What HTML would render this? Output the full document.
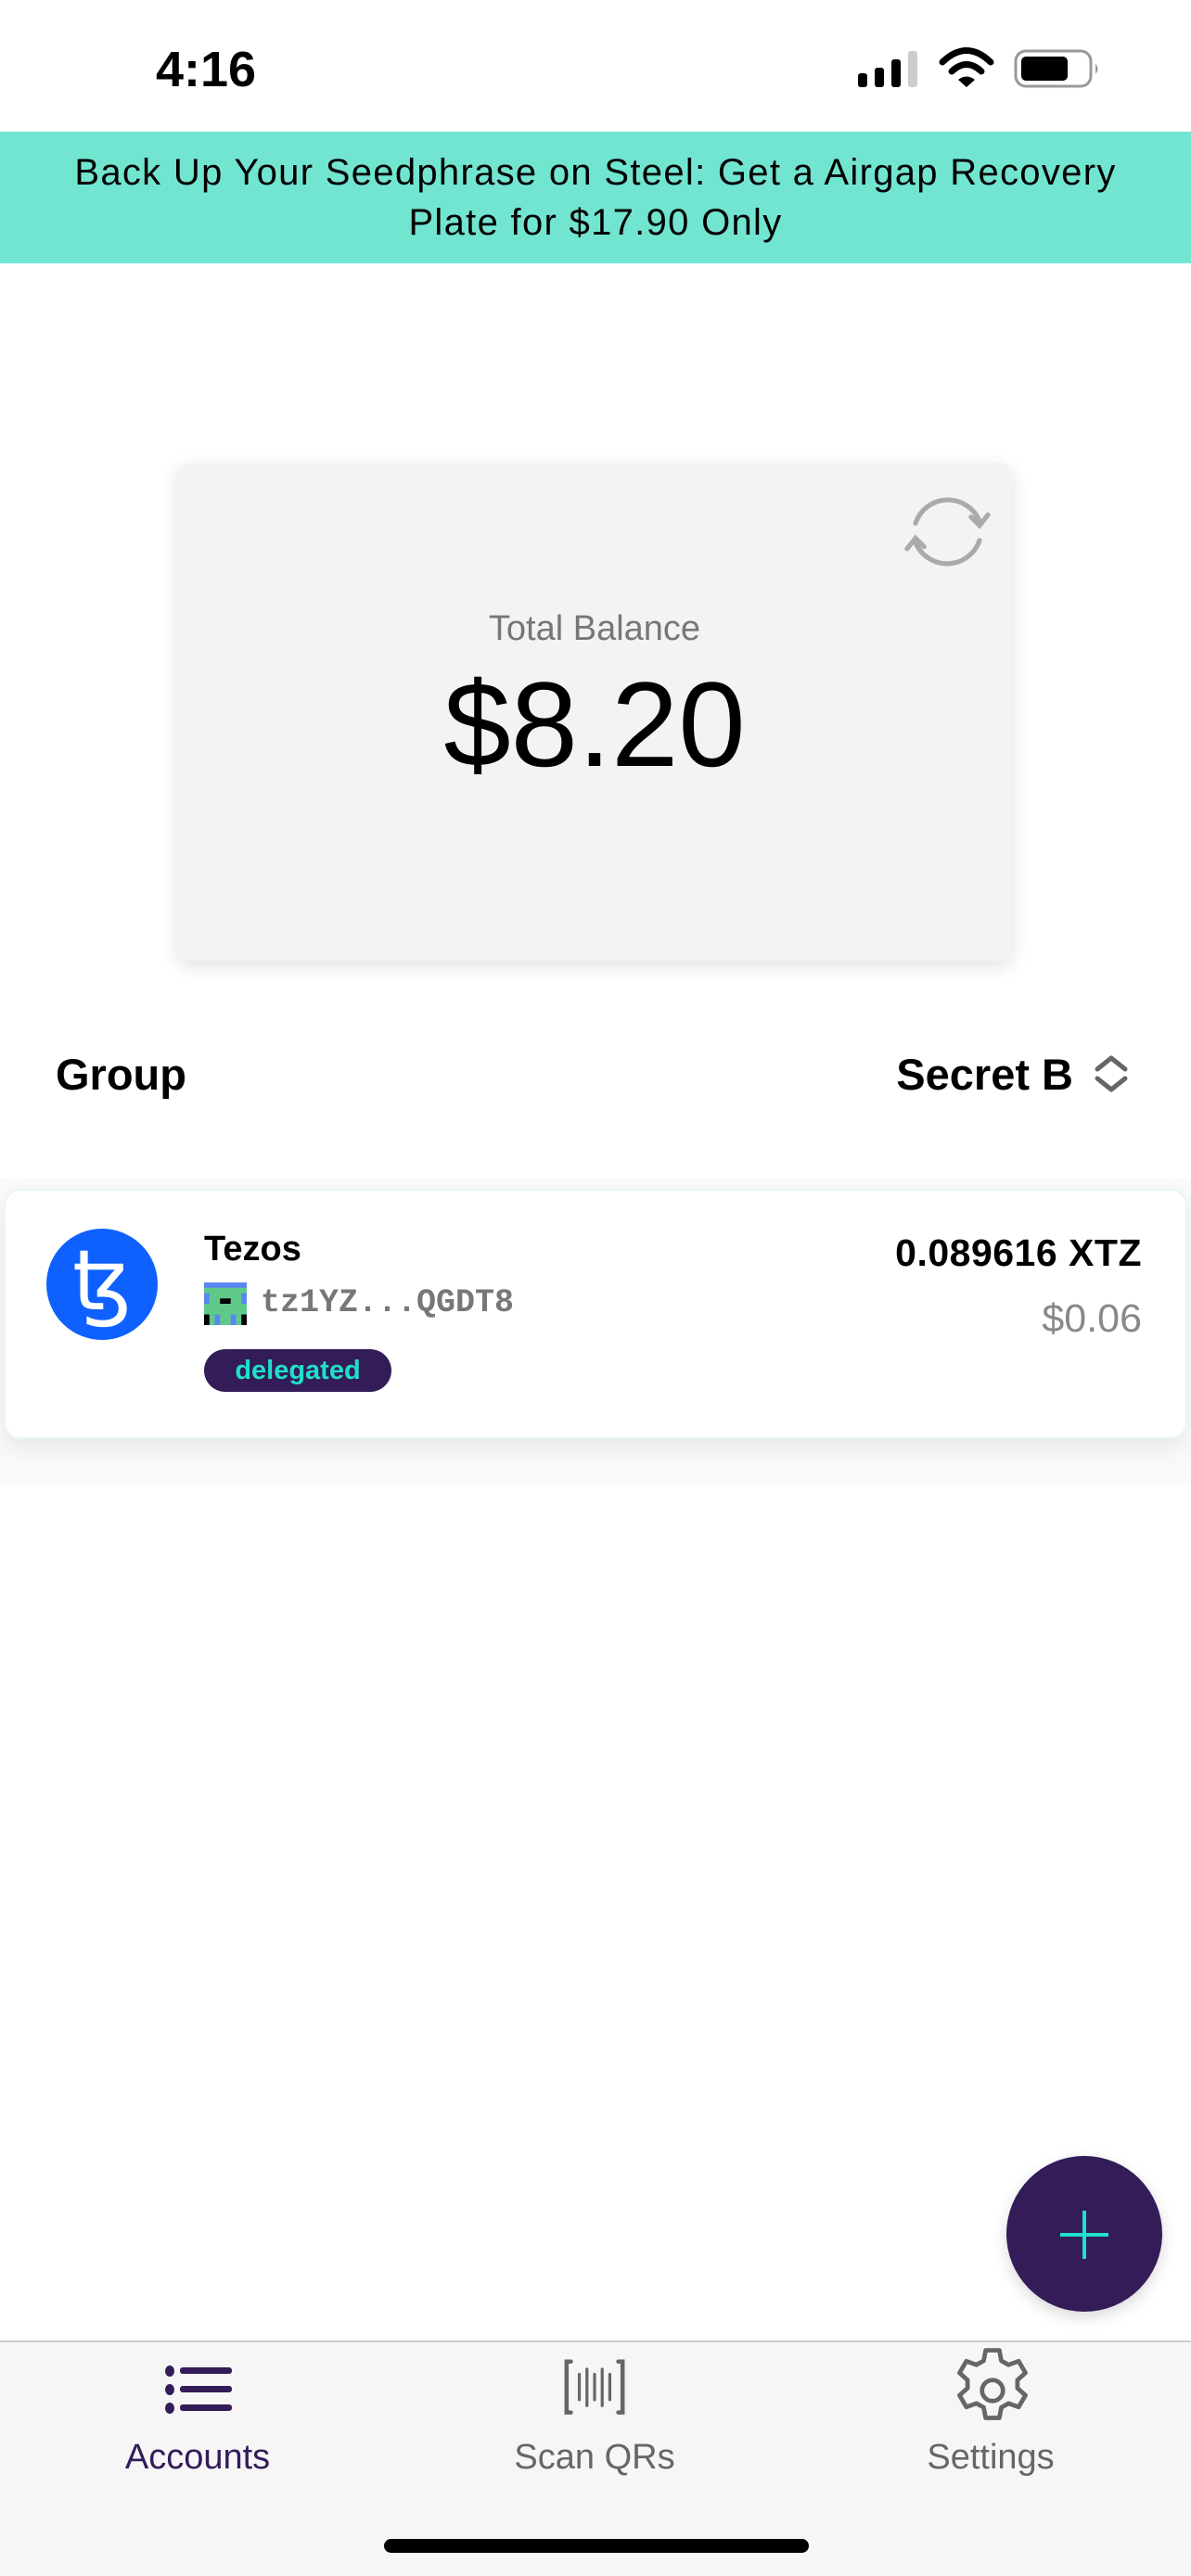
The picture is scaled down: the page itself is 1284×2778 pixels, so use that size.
<!DOCTYPE html>
<html><head><meta charset="utf-8"><style>
*{margin:0;padding:0;box-sizing:border-box}
body{width:1284px;height:2778px;position:relative;background:#fff;font-family:"Liberation Sans",sans-serif;overflow:hidden}
.a{position:absolute}
</style></head><body>
<div class="a" style="left:168px;top:44px;font-size:54px;font-weight:bold;color:#000">4:16</div>
<svg class="a" style="left:900px;top:40px" width="300" height="80" viewBox="0 0 300 80">
<rect x="25" y="39" width="10" height="15" rx="3"/><rect x="43" y="33" width="10" height="21" rx="3"/><rect x="61" y="24" width="10" height="30" rx="3"/><rect x="79" y="15" width="10" height="39" rx="3" fill="#ccc"/>
<path d="M116 27 Q142 2 168 27" stroke="#000" stroke-width="7" fill="none" stroke-linecap="round"/>
<path d="M126 37 Q142 22 158 37" stroke="#000" stroke-width="7" fill="none" stroke-linecap="round"/>
<path d="M133 46 L142 54 L151 46 Q142 39 133 46Z"/>
<rect x="195" y="15" width="81" height="38" rx="11" fill="none" stroke="#999" stroke-width="3"/>
<rect x="201" y="21" width="50" height="26" rx="5"/>
<path d="M281 29 Q286 34 281 40Z" fill="#999"/>
</svg>
<div class="a" style="left:0;top:142px;width:1284px;height:142px;background:#72e5d1;text-align:center;font-size:40px;letter-spacing:1.3px;line-height:54px;padding-top:17px;color:#000">Back Up Your Seedphrase on Steel: Get a Airgap Recovery<br>Plate for $17.90 Only</div>
<div class="a" style="left:191px;top:499px;width:900px;height:537px;background:#f3f3f3;border-radius:14px;box-shadow:0 6px 20px rgba(0,0,0,0.12)"></div>
<svg class="a" style="left:964px;top:516px" width="115" height="115" viewBox="0 0 100 100" fill="none" stroke="#aaa" stroke-width="4.5" stroke-linecap="round">
<path d="M20 42 A32 32 0 0 1 80 40"/><path d="M80 58 A32 32 0 0 1 20 60"/>
<path d="M72 36 L80 44 L88 34"/><path d="M12 66 L20 56 L28 64"/></svg>
<div class="a" style="left:191px;width:900px;top:657px;text-align:center;font-size:38px;color:#777">Total Balance</div>
<div class="a" style="left:191px;width:900px;top:711px;text-align:center;font-size:130px;color:#000;line-height:140px">$8.20</div>
<div class="a" style="left:60px;top:1131px;font-size:47px;font-weight:bold">Group</div>
<div class="a" style="right:127px;top:1131px;font-size:47px;font-weight:bold">Secret B</div>
<svg class="a" style="left:1178px;top:1136px" width="40" height="44" viewBox="0 0 40 44" fill="none" stroke="#666" stroke-width="5" stroke-linecap="round" stroke-linejoin="round"><path d="M5 17 L20 5 L35 17"/><path d="M5 27 L20 39 L35 27"/></svg>
<div class="a" style="left:0;top:1270px;width:1284px;height:330px;background:#fafafa"></div>
<div class="a" style="left:4px;top:1282px;width:1276px;height:270px;background:#fff;border-radius:18px;border:2px solid #e8f7f4;box-shadow:0 10px 24px rgba(0,0,0,0.08)"></div>
<div class="a" style="left:50px;top:1325px;width:120px;height:120px;border-radius:50%;background:#0f61ff;color:#fff;font-size:90px;text-align:center;line-height:116px;font-family:'Liberation Serif',serif">ꜩ</div>
<div class="a" style="left:220px;top:1326px;font-size:38px;font-weight:bold">Tezos</div>
<svg class="a" style="left:220px;top:1383px" width="46" height="46" viewBox="0 0 8 8"><rect width="8" height="8" rx="1.2" fill="#5fc98a"/><rect x="0" y="0" width="8" height="1" fill="#5a86f0"/><rect x="0" y="2" width="1" height="2" fill="#5a86f0"/><rect x="7" y="2" width="1" height="2" fill="#5a86f0"/><rect x="3" y="3" width="2" height="1" fill="#000"/><rect x="0" y="6" width="1" height="2" fill="#000"/><rect x="7" y="6" width="1" height="2" fill="#000"/><rect x="2" y="6" width="1" height="2" fill="#5a86f0"/><rect x="5" y="6" width="1" height="2" fill="#5a86f0"/></svg>
<div class="a" style="left:281px;top:1385px;font-size:35px;font-weight:bold;color:#777;font-family:'Liberation Mono',monospace">tz1YZ...QGDT8</div>
<div class="a" style="left:220px;top:1455px;width:202px;height:46px;border-radius:23px;background:#331c58;color:#1fe0c8;font-size:29px;font-weight:bold;text-align:center;line-height:46px">delegated</div>
<div class="a" style="right:53px;top:1328px;font-size:41px;font-weight:bold;letter-spacing:0.5px">0.089616 XTZ</div>
<div class="a" style="right:53px;top:1398px;font-size:43px;color:#888">$0.06</div>
<div class="a" style="left:1085px;top:2325px;width:168px;height:168px;border-radius:50%;background:#331c58;box-shadow:0 6px 16px rgba(0,0,0,0.15)"></div>
<div class="a" style="left:1167px;top:2384px;width:4px;height:52px;background:#1fe0c8"></div>
<div class="a" style="left:1143px;top:2408px;width:52px;height:4px;background:#1fe0c8"></div>
<div class="a" style="left:0;top:2524px;width:1284px;height:254px;background:#f6f6f6;border-top:2px solid #ccc"></div>
<svg class="a" style="left:170px;top:2545px" width="90" height="70" viewBox="0 0 90 70"><g fill="#331c58"><ellipse cx="13" cy="12" rx="5" ry="6"/><ellipse cx="13" cy="32" rx="5" ry="6"/><ellipse cx="13" cy="52" rx="5" ry="6"/><rect x="24" y="8" width="56" height="7" rx="3"/><rect x="24" y="28" width="56" height="7" rx="3"/><rect x="24" y="48" width="56" height="7" rx="3"/></g></svg>
<svg class="a" style="left:603px;top:2544px" width="76" height="64" viewBox="0 0 80 70" fill="none" stroke="#666" stroke-width="5" stroke-linecap="round"><path d="M12 3 H7 V63 H12"/><path d="M68 3 H73 V63 H68"/><path d="M22 18 V48 M31 12 V55 M40 18 V48 M49 12 V55 M58 18 V48" stroke-width="3.5"/></svg>
<svg class="a" style="left:1018px;top:2526px" width="104" height="104" viewBox="0 0 24 24" fill="none" stroke="#666" stroke-width="1.1" stroke-linejoin="round"><circle cx="12" cy="12" r="2.6"/><path d="M10.3 2 h3.4 l.5 2.6 1.8 1 2.5-.9 1.7 2.9-2 1.8v2l2 1.8-1.7 2.9-2.5-.9-1.8 1-.5 2.6h-3.4l-.5-2.6-1.8-1-2.5.9-1.7-2.9 2-1.8v-2l-2-1.8 1.7-2.9 2.5.9 1.8-1z"/></svg>
<div class="a" style="left:113px;width:200px;top:2629px;text-align:center;font-size:38px;color:#331c58">Accounts</div>
<div class="a" style="left:541px;width:200px;top:2629px;text-align:center;font-size:38px;color:#666">Scan QRs</div>
<div class="a" style="left:968px;width:200px;top:2629px;text-align:center;font-size:38px;color:#666">Settings</div>
<div class="a" style="left:414px;top:2738px;width:458px;height:15px;border-radius:8px;background:#000"></div>
</body></html>
